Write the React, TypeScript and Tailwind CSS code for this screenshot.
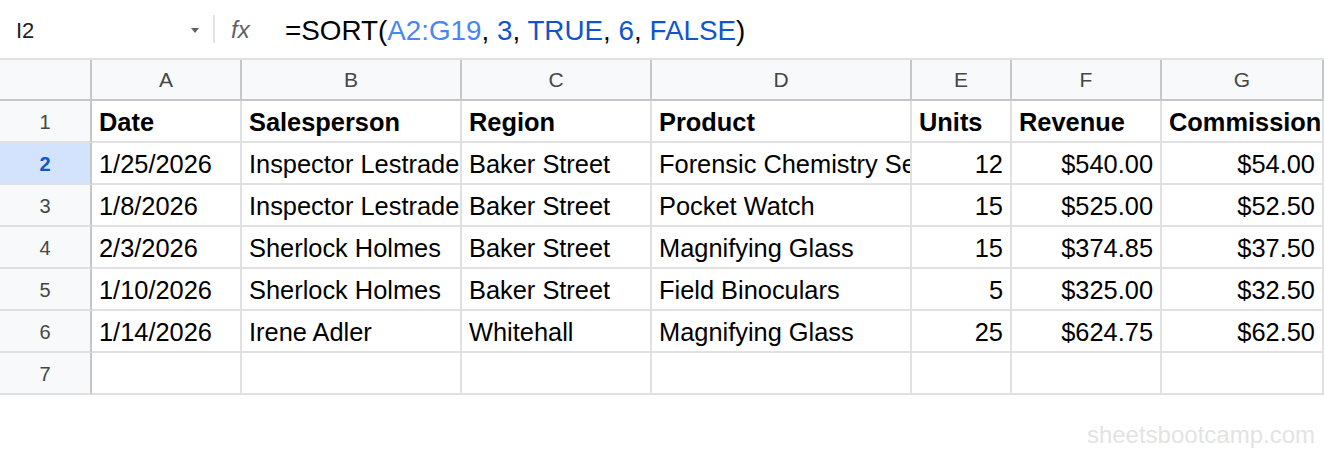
import React from 'react';

const COLS = ['A', 'B', 'C', 'D', 'E', 'F', 'G'];

type Cell = { text: string; right?: boolean };

const HEADER: Cell[] = [
  { text: 'Date' },
  { text: 'Salesperson' },
  { text: 'Region' },
  { text: 'Product' },
  { text: 'Units' },
  { text: 'Revenue' },
  { text: 'Commission' },
];

const DATA: string[][] = [
  ['1/25/2026', 'Inspector Lestrade', 'Baker Street', 'Forensic Chemistry Set', '12', '$540.00', '$54.00'],
  ['1/8/2026', 'Inspector Lestrade', 'Baker Street', 'Pocket Watch', '15', '$525.00', '$52.50'],
  ['2/3/2026', 'Sherlock Holmes', 'Baker Street', 'Magnifying Glass', '15', '$374.85', '$37.50'],
  ['1/10/2026', 'Sherlock Holmes', 'Baker Street', 'Field Binoculars', '5', '$325.00', '$32.50'],
  ['1/14/2026', 'Irene Adler', 'Whitehall', 'Magnifying Glass', '25', '$624.75', '$62.50'],
];

// columns E, F, G hold numbers and sit right-aligned
const isRight = (i: number) => i >= 4;

function FormulaBar() {
  return (
    <div className="flex h-[60px] items-center border-b-2 border-[#e1e1e1] bg-white">
      <div className="flex w-[213px] items-center justify-between pl-[16px] pr-[14px] pt-[2px]">
        <span className="text-[22px] text-[#202124]">I2</span>
        <svg width="8" height="6" viewBox="0 0 8 6" className="mt-[2px]">
          <path d="M0 0 L8 0 L4 5 Z" fill="#5f6368" />
        </svg>
      </div>
      <div className="h-[28px] w-[2px] bg-[#e3e3e3]" />
      <span className="ml-[16px] w-[54px] pt-[2px] text-[24px] italic text-[#5f6368]">fx</span>
      <span className="pt-[3px] text-[27.8px] leading-none text-[#000]">
        =SORT(
        <span className="text-[#4a86f0]">A2:G19</span>,{' '}
        <span className="text-[#1155cc]">3</span>,{' '}
        <span className="text-[#1155cc]">TRUE</span>,{' '}
        <span className="text-[#1155cc]">6</span>,{' '}
        <span className="text-[#1155cc]">FALSE</span>)
      </span>
    </div>
  );
}

function RowHeader({ n, active }: { n: number; active?: boolean }) {
  return (
    <div
      className={`flex h-[42px] items-center justify-center border-b-2 border-r-2 border-b-[#e1e1e1] border-r-[#c4c7c5] pt-[2px] text-[20px] ${
        active ? 'bg-[#d3e3fd] font-bold text-[#0b57d0]' : 'bg-[#f8f9fa] text-[#444746]'
      }`}
    >
      {n}
    </div>
  );
}

function DataCell({ text, right, bold }: { text: string; right?: boolean; bold?: boolean }) {
  return (
    <div
      className={`flex h-[42px] items-center overflow-hidden whitespace-nowrap border-b-2 border-r-2 border-[#e1e1e1] bg-white px-[7px] pt-[3px] text-[25.4px] text-black ${
        right ? 'justify-end' : 'justify-start'
      } ${bold ? 'font-bold' : ''}`}
    >
      {text}
    </div>
  );
}

export default function App() {
  return (
    <div
      className="relative h-[458px] w-[1324px] overflow-hidden bg-white"
      style={{ fontFamily: '"Liberation Sans", Arial, sans-serif' }}
    >
      <FormulaBar />
      <div className="grid grid-cols-[92px_150px_220px_190px_260px_100px_150px_162px]">
        {/* column headers */}
        <div className="h-[41px] border-b-2 border-r-2 border-[#c4c7c5] bg-[#f8f9fa]" />
        {COLS.map((c) => (
          <div
            key={c}
            className="flex h-[41px] items-center justify-center border-b-2 border-r-2 border-b-[#c4c7c5] border-r-[#c7c7c7] bg-[#f8f9fa] pt-[1px] text-[21px] text-[#444746]"
          >
            {c}
          </div>
        ))}

        {/* header row */}
        <RowHeader n={1} />
        {HEADER.map((h) => (
          <DataCell key={h.text} text={h.text} bold />
        ))}

        {DATA.map((row, r) => (
          <React.Fragment key={r}>
            <RowHeader n={r + 2} active={r === 0} />
            {row.map((v, i) => (
              <DataCell key={i} text={v} right={isRight(i)} />
            ))}
          </React.Fragment>
        ))}

        <RowHeader n={7} />
        {COLS.map((c) => (
          <DataCell key={c} text="" />
        ))}
      </div>

      <div className="absolute bottom-[5px] right-[9px] text-[24px] text-[#e3e3e3]">sheetsbootcamp.com</div>
    </div>
  );
}
